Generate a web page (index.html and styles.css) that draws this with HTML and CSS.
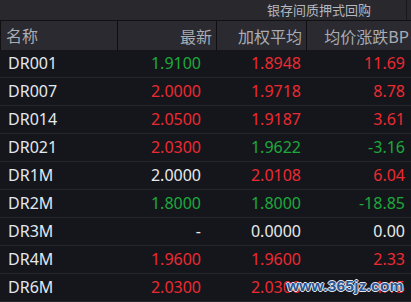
FILE: index.html
```html
<!DOCTYPE html>
<html lang="zh">
<head>
<meta charset="utf-8">
<title>银存间质押式回购</title>
<link rel="stylesheet" href="styles.css">
</head>
<body>
<div class="board">
  <div class="topbar"><span class="title">银存间质押式回购</span></div>
  <div class="table">
    <div class="row head">
      <div class="cell name">名称</div>
      <div class="cell c2">最新</div>
      <div class="cell c3">加权平均</div>
      <div class="cell c4">均价涨跌BP</div>
    </div>
    <div class="row"><div class="cell name">DR001</div><div class="cell c2 up-g">1.9100</div><div class="cell c3 red">1.8948</div><div class="cell c4 red">11.69</div></div>
    <div class="row"><div class="cell name">DR007</div><div class="cell c2 red">2.0000</div><div class="cell c3 red">1.9718</div><div class="cell c4 red">8.78</div></div>
    <div class="row"><div class="cell name">DR014</div><div class="cell c2 red">2.0500</div><div class="cell c3 red">1.9187</div><div class="cell c4 red">3.61</div></div>
    <div class="row"><div class="cell name">DR021</div><div class="cell c2 red">2.0300</div><div class="cell c3 up-g">1.9622</div><div class="cell c4 up-g">-3.16</div></div>
    <div class="row"><div class="cell name">DR1M</div><div class="cell c2 white">2.0000</div><div class="cell c3 red">2.0108</div><div class="cell c4 red">6.04</div></div>
    <div class="row"><div class="cell name">DR2M</div><div class="cell c2 up-g">1.8000</div><div class="cell c3 up-g">1.8000</div><div class="cell c4 up-g">-18.85</div></div>
    <div class="row"><div class="cell name">DR3M</div><div class="cell c2 white">-</div><div class="cell c3 white">0.0000</div><div class="cell c4 white">0.00</div></div>
    <div class="row"><div class="cell name">DR4M</div><div class="cell c2 red">1.9600</div><div class="cell c3 red">1.9600</div><div class="cell c4 red">2.33</div></div>
    <div class="row"><div class="cell name">DR6M</div><div class="cell c2 red">2.0300</div><div class="cell c3 red">2.0300</div><div class="cell c4 red">4.15</div></div>
  </div>
  <div class="watermark">www.365jz.com</div>
</div>
</body>
</html>
```

FILE: styles.css
```css
html, body {
  margin: 0;
  padding: 0;
  background: #14161b;
  overflow: hidden;
}

.board {
  position: relative;
  width: 411px;
  height: 302px;
  overflow: hidden;
  background: #14161b;
  font-family: "Noto Sans", "Noto Sans CJK SC", sans-serif;
}

.topbar {
  height: 20px;
  background: #28282d;
  border-bottom: 1px solid #111114;
  display: flex;
  justify-content: flex-end;
  align-items: center;
  padding-right: 4px;
}

.title {
  font-family: "Noto Sans CJK SC", sans-serif;
  font-size: 13px;
  color: #b4b8c0;
  line-height: 20px;
  height: 20px;
  padding-right: 35px;
  border-right: 1px solid #18181c;
}

.table {
  display: flex;
  flex-direction: column;
}

.row {
  display: grid;
  grid-template-columns: 116px 99px 90px 106px;
  height: 28px;
  box-sizing: border-box;
  border-bottom: 1px solid #25272c;
  align-items: center;
  font-size: 16px;
  line-height: 27px;
}

.row.head {
  height: 29px;
  background: #2a2a30;
  border-bottom: none;
  border-left: 1px solid #111114;
  font-family: "Noto Sans CJK SC", sans-serif;
  font-size: 16px;
  color: #a9acb4;
  align-items: stretch;
  line-height: 29px;
}

.cell {
  white-space: nowrap;
  text-align: right;
}

.row .name {
  text-align: left;
  padding-left: 8px;
  color: #e2e8ee;
}

.row .c2 { padding-right: 14px; }
.row .c3 { padding-right: 4px; }
.row .c4 { padding-right: 6px; }

.row.head .name {
  padding-left: 5px;
  color: #a9acb4;
}

.row.head .c2,
.row.head .c3,
.row.head .c4 {
  border-left: 1px solid #0f0f12;
  padding-right: 4px;
  padding-top: 1px;
}

.row.head .c4 { padding-right: 3px; }

.red { color: #ec2a32; }
.up-g { color: #1ea83b; }
.white { color: #eaeaea; }

.watermark {
  position: absolute;
  left: 287px;
  top: 277px;
  font-family: "Liberation Sans", sans-serif;
  font-weight: bold;
  font-size: 15.5px;
  color: #2a5594;
  letter-spacing: 0.2px;
  text-shadow: 1px 0 0 #e6e8f0, -1px 0 0 #e6e8f0, 0 1px 0 #e6e8f0, 0 -1px 0 #e6e8f0;
}
```
